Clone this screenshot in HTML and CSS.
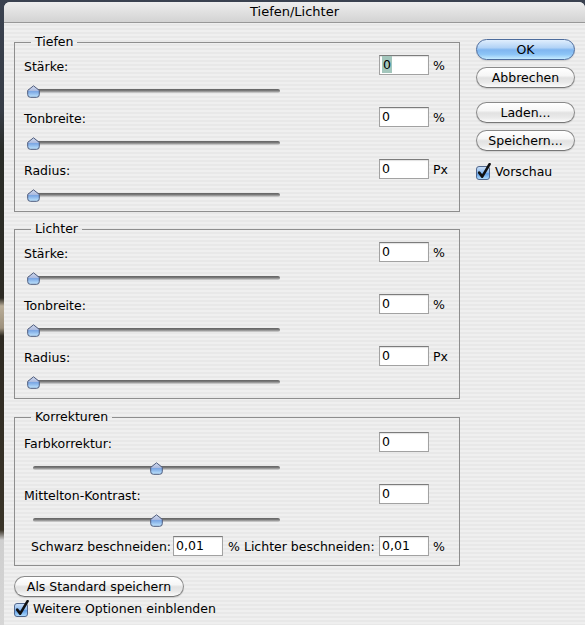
FILE: index.html
```html
<!DOCTYPE html>
<html lang="de">
<head>
<meta charset="utf-8">
<title>Tiefen/Lichter</title>
<link rel="stylesheet" href="styles.css">
</head>
<body>
<svg class="defs" width="0" height="0" aria-hidden="true">
  <defs>
    <linearGradient id="thumbFill" x1="0" y1="0" x2="0" y2="1">
      <stop offset="0" stop-color="#d3dbee"/>
      <stop offset="0.45" stop-color="#a9b9de"/>
      <stop offset="0.5" stop-color="#79a6e4"/>
      <stop offset="1" stop-color="#c2e6fd"/>
    </linearGradient>
    <linearGradient id="checkFill" x1="0" y1="0" x2="0" y2="1">
      <stop offset="0" stop-color="#cfe2f8"/>
      <stop offset="0.45" stop-color="#8fbcef"/>
      <stop offset="0.55" stop-color="#5f9de6"/>
      <stop offset="1" stop-color="#b6e1ff"/>
    </linearGradient>
    <symbol id="thumb" viewBox="0 0 13 13">
      <path d="M6.5 0.8 L12.3 5.4 V9.6 Q12.3 12.3 9.6 12.3 H3.4 Q0.7 12.3 0.7 9.6 V5.4 Z" fill="url(#thumbFill)" stroke="#4d5b7c" stroke-width="1"/>
    </symbol>
    <symbol id="check" viewBox="0 0 16 17">
      <rect x="0.5" y="3.5" width="13" height="13" rx="2.5" fill="url(#checkFill)" stroke="#52678c"/>
      <path d="M3.2 9.6 L6.2 13.6 L13.6 1.2" fill="none" stroke="#111" stroke-width="2.6" stroke-linecap="round" stroke-linejoin="round"/>
    </symbol>
  </defs>
</svg>

<div class="window">
  <div class="titlebar">Tiefen/Lichter</div>
  <div class="content">
    <div class="main">
      <div class="groups">
        <fieldset class="group">
          <legend>Tiefen</legend>
          <div class="row">
            <div class="control">
              <div class="label">Stärke:</div>
              <div class="slider"><span class="track"></span><svg class="thumb"><use href="#thumb"/></svg></div>
            </div>
            <div class="value"><span class="field"><span class="sel">0</span></span><span class="unit">%</span></div>
          </div>
          <div class="row">
            <div class="control">
              <div class="label">Tonbreite:</div>
              <div class="slider"><span class="track"></span><svg class="thumb"><use href="#thumb"/></svg></div>
            </div>
            <div class="value"><span class="field">0</span><span class="unit">%</span></div>
          </div>
          <div class="row">
            <div class="control">
              <div class="label">Radius:</div>
              <div class="slider"><span class="track"></span><svg class="thumb"><use href="#thumb"/></svg></div>
            </div>
            <div class="value"><span class="field">0</span><span class="unit">Px</span></div>
          </div>
        </fieldset>

        <fieldset class="group">
          <legend>Lichter</legend>
          <div class="row">
            <div class="control">
              <div class="label">Stärke:</div>
              <div class="slider"><span class="track"></span><svg class="thumb"><use href="#thumb"/></svg></div>
            </div>
            <div class="value"><span class="field">0</span><span class="unit">%</span></div>
          </div>
          <div class="row">
            <div class="control">
              <div class="label">Tonbreite:</div>
              <div class="slider"><span class="track"></span><svg class="thumb"><use href="#thumb"/></svg></div>
            </div>
            <div class="value"><span class="field">0</span><span class="unit">%</span></div>
          </div>
          <div class="row">
            <div class="control">
              <div class="label">Radius:</div>
              <div class="slider"><span class="track"></span><svg class="thumb"><use href="#thumb"/></svg></div>
            </div>
            <div class="value"><span class="field">0</span><span class="unit">Px</span></div>
          </div>
        </fieldset>

        <fieldset class="group corrections">
          <legend>Korrekturen</legend>
          <div class="row">
            <div class="control">
              <div class="label">Farbkorrektur:</div>
              <div class="slider centered"><span class="track"></span><svg class="thumb mid"><use href="#thumb"/></svg></div>
            </div>
            <div class="value"><span class="field">0</span></div>
          </div>
          <div class="row">
            <div class="control">
              <div class="label">Mittelton-Kontrast:</div>
              <div class="slider centered"><span class="track"></span><svg class="thumb mid"><use href="#thumb"/></svg></div>
            </div>
            <div class="value"><span class="field">0</span></div>
          </div>
          <div class="row clip-row">
            <div class="control clip">
              <span>Schwarz beschneiden:</span>
              <span class="field">0,01</span>
              <span class="clip-text">% Lichter beschneiden:</span>
            </div>
            <div class="value"><span class="field">0,01</span><span class="unit">%</span></div>
          </div>
        </fieldset>
      </div>

      <div class="actions">
        <div class="btn default ok">OK</div>
        <div class="btn cancel">Abbrechen</div>
        <div class="btn load">Laden...</div>
        <div class="btn save">Speichern...</div>
        <div class="checkbox preview"><svg class="check"><use href="#check"/></svg><span>Vorschau</span></div>
      </div>
    </div>

    <div class="btn standard">Als Standard speichern</div>
    <div class="checkbox more"><svg class="check"><use href="#check"/></svg><span>Weitere Optionen einblenden</span></div>
  </div>
</div>
</body>
</html>
```

FILE: styles.css
```css
* {
  box-sizing: border-box;
}

html,
body {
  margin: 0;
  height: 100%;
}

body {
  overflow: hidden;
  font-family: "DejaVu Sans", sans-serif;
  font-size: 12.5px;
  color: #000;
  background: linear-gradient(
    #3a4250 0,
    #363c46 110px,
    #2a2d28 150px,
    #2d2b24 298px,
    #b9ad98 306px,
    #9c907c 328px,
    #2e2a22 336px,
    #3a3428 530px,
    #cfcfcf 540px,
    #d6d6d6 625px
  );
}

.defs {
  position: absolute;
  width: 0;
  height: 0;
}

/* dialog sheet */
.window {
  margin: 2px 0 0 4px;
  width: 581px;
  height: 623px;
  border-radius: 6px 6px 0 0;
  overflow: hidden;
  display: flex;
  flex-direction: column;
  background: repeating-linear-gradient(#efefef 0 2px, #e8e8e8 2px 4px);
}

.titlebar {
  flex: none;
  height: 21px;
  border-bottom: 1px solid #989898;
  background: linear-gradient(#eeeeee, #d3d3d3);
  text-align: center;
  font-size: 13px;
  line-height: 20px;
}

.content {
  padding: 11px 0 0 10px;
}

.main {
  display: flex;
  gap: 16px;
}

.groups {
  width: 446px;
  display: flex;
  flex-direction: column;
  gap: 9px;
}

/* grouped box with caption in the top border */
.group {
  margin: 0;
  min-width: 0;
  padding: 5px 0 0 9px;
  border: 1px solid #8e8e8e;
}

.group legend {
  margin-left: 7px;
  padding: 0 4px;
  line-height: 16px;
}

.group.corrections {
  margin-top: 1px;
  padding-top: 7px;
  padding-bottom: 8px;
}

.row {
  display: flex;
  height: 52px;
}

.control {
  width: 355px;
  display: flex;
  flex-direction: column;
}

.label {
  height: 22px;
  padding-top: 4px;
  line-height: 16px;
}

.value {
  display: flex;
  align-items: center;
  height: 20px;
}

.unit {
  margin-left: 4px;
}

.field {
  display: inline-block;
  width: 50px;
  height: 20px;
  padding-left: 2px;
  border: 1px solid #a2a2a2;
  border-top-color: #7c7c7c;
  background: #fff;
  box-shadow: inset 0 1px 1px rgba(0, 0, 0, 0.12);
  line-height: 18px;
}

.sel {
  display: inline-block;
  padding: 0 1px;
  background: #a3c6bc;
  line-height: 17px;
}

/* horizontal slider */
.slider {
  position: relative;
  height: 28px;
  width: 254px;
  margin-left: 3px;
  display: flex;
  align-items: center;
}

.slider .track {
  display: block;
  margin-left: 1px;
  width: 252px;
  height: 4px;
  border-radius: 2px;
  background: linear-gradient(#626262 0, #7a7a7a 40%, #a5a5a5 70%, #dadada 100%);
}

.slider.centered {
  margin-left: 9px;
  width: 248px;
}

.slider.centered .track {
  margin-left: 0;
  width: 247px;
}

.thumb {
  position: absolute;
  left: 0;
  top: 8px;
  width: 13px;
  height: 13px;
}

.thumb.mid {
  left: calc(50% - 7px);
}

.row.clip-row {
  height: 21px;
}

.control.clip {
  flex-direction: row;
  align-items: center;
  height: 20px;
  padding-left: 7px;
}

.control.clip .field {
  margin-left: 2px;
}

.clip-text {
  margin-left: 5px;
}

/* push buttons */
.actions {
  width: 99px;
  display: flex;
  flex-direction: column;
}

.btn {
  height: 21px;
  border: 1px solid #8a8a8a;
  border-bottom-color: #777;
  border-radius: 11px;
  background: linear-gradient(#ffffff 0%, #f6f6f6 40%, #e2e2e2 52%, #e9e9e9 75%, #fbfbfb 100%);
  box-shadow: 0 1px 1px rgba(0, 0, 0, 0.12);
  text-align: center;
  line-height: 19px;
  white-space: nowrap;
}

.btn.default {
  border-color: #4d6c9c;
  background: linear-gradient(#e0eefd 0%, #b2d3f6 40%, #80b6f0 52%, #8cc4f6 75%, #c6ecff 100%);
}

.btn.ok {
  margin-top: 5px;
}

.btn.cancel {
  margin-top: 7px;
}

.btn.load {
  margin-top: 14px;
}

.btn.save {
  margin-top: 7px;
}

.btn.standard {
  margin-top: 10px;
  width: 170px;
}

.checkbox {
  display: flex;
  align-items: center;
  gap: 3px;
}

.check {
  width: 16px;
  height: 17px;
}

.checkbox.preview {
  margin-top: 12px;
}

.checkbox.more {
  margin-top: 3px;
}
```
